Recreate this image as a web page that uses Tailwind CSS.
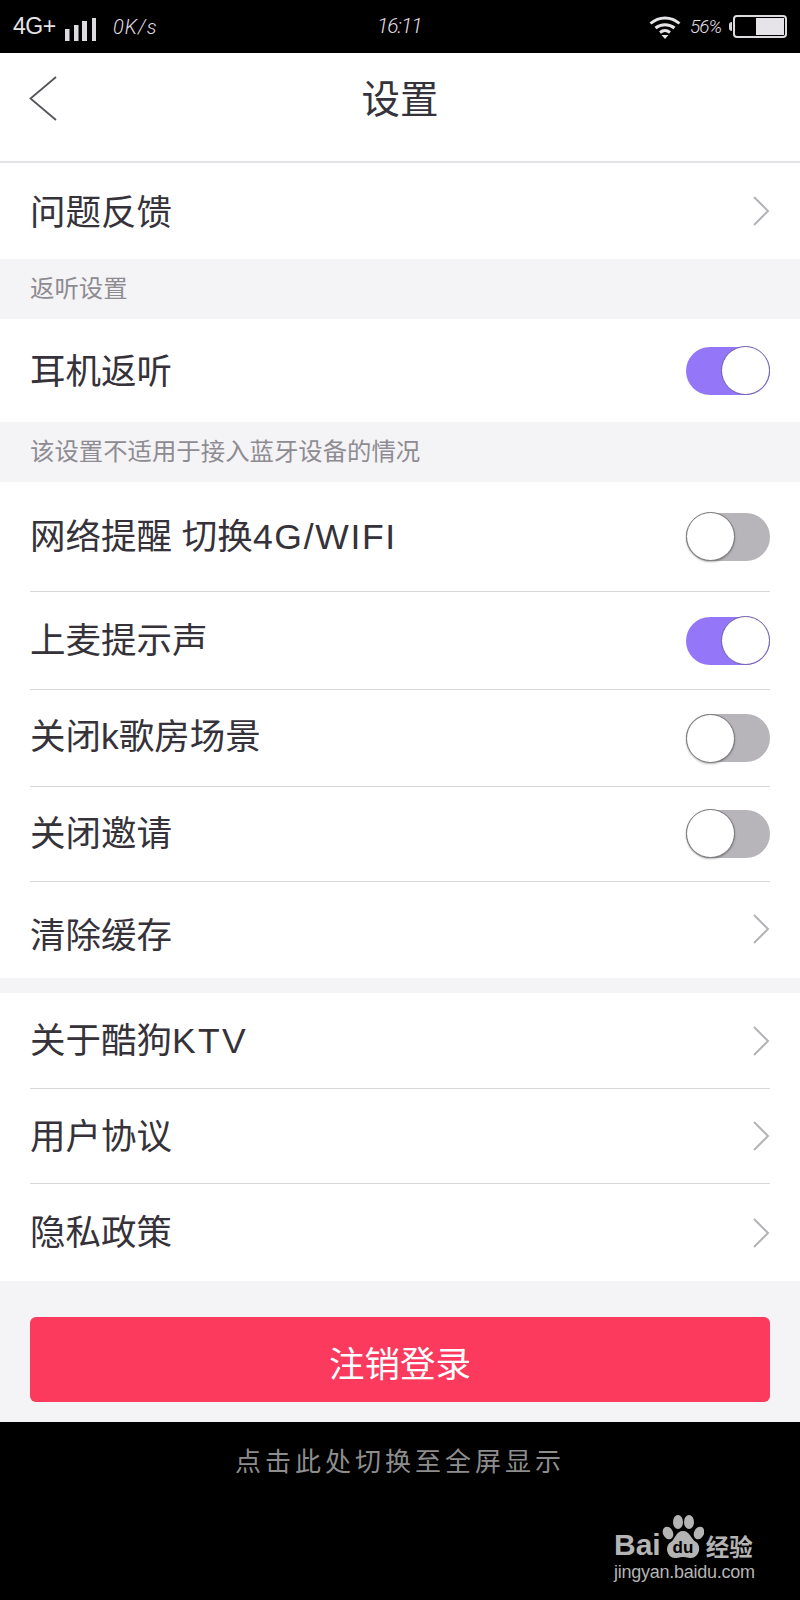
<!DOCTYPE html>
<html>
  <head>
    <meta charset="utf-8" />
    <title>设置</title>
    <script src="https://cdn.jsdelivr.net/npm/@tailwindcss/browser@4"></script>
  </head>
  <body>
    <div class="flex h-[1600px] w-[800px] flex-col overflow-hidden bg-[#f4f3f6] text-[#35323a]" style='font-family: "Liberation Sans", "Noto Sans CJK SC", sans-serif;'>
      <!-- Status bar -->
      <div class="flex h-[53px] shrink-0 items-center bg-black pl-[13px] text-[#e6e4e8]">
        <span class="w-[43px] shrink-0 text-[23px] leading-none tracking-[-0.5px]">4G+</span>
        <svg class="ml-[9px] mt-[5px] shrink-0" width="31" height="23" viewBox="0 0 31 23" fill="#dddbe0">
          <rect x="0" y="11" width="4.500" height="12" />
          <rect x="9" y="7" width="4.500" height="16" />
          <rect x="17" y="3" width="5" height="20" />
          <rect x="27" y="0" width="4" height="23" />
        </svg>
        <span class="ml-[17px] w-[45px] shrink-0 font-['Roboto'] text-[20px] leading-none font-light italic tracking-[1px] text-[#e0dee3]">0K/s</span>
        <span class="ml-[219px] w-[45px] shrink-0 font-['Roboto'] text-[21px] leading-none font-light italic tracking-[-1px] text-[#e0dee3]">16:11</span>
        <svg class="ml-[227px] shrink-0" width="32" height="24" viewBox="0 0 32 24" fill="none" stroke="#e6e4e8" stroke-width="3">
          <path d="M1.500 8.500C10 1 22 1 30.500 8.500" />
          <path d="M6.500 13C12 8.500 20 8.500 25.500 13" />
          <path d="M11 17.500C14 15.200 18 15.200 21 17.500" />
          <path d="M12.500 20L16 24L19.500 20Z" fill="#e6e4e8" stroke="none" />
        </svg>
        <span class="ml-[9px] w-[31px] shrink-0 font-['Roboto'] text-[19px] leading-none font-light italic tracking-[-1px] text-[#e0dee3]">56%</span>
        <div class="ml-[8px] h-[9px] w-[3px] shrink-0 rounded-l-sm bg-[#d8d6da]"></div>
        <div class="ml-[1px] flex h-[23px] w-[54px] shrink-0 justify-end rounded-[4px] border-2 border-[#dddbe0] p-[1px]">
          <div class="h-full w-[28px] bg-[#e6e4e8]"></div>
        </div>
      </div>

      <!-- Title bar -->
      <header class="relative flex h-[110px] shrink-0 items-center justify-center border-b-2 border-[#e4e2e7] bg-white pb-[14px]">
        <svg class="absolute left-[29px] top-[23px]" width="30" height="46" viewBox="0 0 30 46" fill="none" stroke="#56545a" stroke-width="1.800">
          <path d="M27 1L1.500 22.500L27 44" />
        </svg>
        <h1 class="text-[38.5px] leading-none font-normal">设置</h1>
      </header>

      <div class="flex h-[96px] shrink-0 items-center justify-between bg-white pl-[30px] pr-[30px]">
        <span class="mt-[6px] text-[35.5px] leading-none">问题反馈</span>
        <svg width="18" height="32" viewBox="0 0 18 32" fill="none" stroke="#b5b3b8" stroke-width="2"><path d="M2 2L16 16L2 30" /></svg>
      </div>

      <div class="flex h-[60px] shrink-0 items-center pl-[30px] text-[24.4px] leading-none text-[#8e8c92]">返听设置</div>

      <div class="flex h-[103px] shrink-0 items-center justify-between bg-white pl-[30px] pr-[30px]">
        <span class="mt-[4px] text-[35.5px] leading-none">耳机返听</span>
        <div class="flex h-[48px] w-[84px] items-center justify-end rounded-full bg-[#9476f8]">
          <div class="size-[49px] rounded-full border border-[#6f5aa8] bg-white"></div>
        </div>
      </div>

      <div class="flex h-[60px] shrink-0 items-center pl-[30px] text-[24.4px] leading-none text-[#8e8c92]">该设置不适用于接入蓝牙设备的情况</div>

      <div class="flex shrink-0 flex-col bg-white pl-[30px] pr-[30px]">
        <div class="flex h-[110px] items-center justify-between border-b border-[#d9d7dc]">
          <span class="mt-[2px] text-[35.5px] leading-none">网络提醒 切换<span class="tracking-[1.700px]">4G/WIFI</span></span>
          <div class="flex h-[48px] w-[84px] items-center rounded-full bg-[#b7b5b9]">
            <div class="size-[49px] rounded-full border border-[#77757a] bg-white shadow-[0_1px_2px_rgba(0,0,0,0.3)]"></div>
          </div>
        </div>
        <div class="flex h-[98px] items-center justify-between border-b border-[#d9d7dc]">
          <span class="mt-[2px] text-[35.5px] leading-none">上麦提示声</span>
          <div class="flex h-[48px] w-[84px] items-center justify-end rounded-full bg-[#9476f8]">
            <div class="size-[49px] rounded-full border border-[#6f5aa8] bg-white"></div>
          </div>
        </div>
        <div class="flex h-[97px] items-center justify-between border-b border-[#d9d7dc]">
          <span class="text-[35.5px] leading-none">关闭k歌房场景</span>
          <div class="flex h-[48px] w-[84px] items-center rounded-full bg-[#b7b5b9]">
            <div class="size-[49px] rounded-full border border-[#77757a] bg-white shadow-[0_1px_2px_rgba(0,0,0,0.3)]"></div>
          </div>
        </div>
        <div class="flex h-[95px] items-center justify-between border-b border-[#d9d7dc]">
          <span class="mt-[2px] text-[35.5px] leading-none">关闭邀请</span>
          <div class="-mt-[1px] flex h-[48px] w-[84px] items-center rounded-full bg-[#b7b5b9]">
            <div class="size-[49px] rounded-full border border-[#77757a] bg-white shadow-[0_1px_2px_rgba(0,0,0,0.3)]"></div>
          </div>
        </div>
        <div class="flex h-[96px] items-center justify-between">
          <span class="mt-[14px] text-[35.5px] leading-none">清除缓存</span>
          <svg class="-mt-[2px]" width="18" height="32" viewBox="0 0 18 32" fill="none" stroke="#b5b3b8" stroke-width="2"><path d="M2 2L16 16L2 30" /></svg>
        </div>
      </div>

      <div class="mt-[15px] flex shrink-0 flex-col bg-white pl-[30px] pr-[30px]">
        <div class="flex h-[96px] items-center justify-between border-b border-[#d9d7dc]">
          <span class="mt-[2px] text-[35.5px] leading-none">关于酷狗<span class="tracking-[2.300px]">KTV</span></span>
          <svg width="18" height="32" viewBox="0 0 18 32" fill="none" stroke="#b5b3b8" stroke-width="2"><path d="M2 2L16 16L2 30" /></svg>
        </div>
        <div class="flex h-[95px] items-center justify-between border-b border-[#d9d7dc]">
          <span class="mt-[4px] text-[35.5px] leading-none">用户协议</span>
          <svg width="18" height="32" viewBox="0 0 18 32" fill="none" stroke="#b5b3b8" stroke-width="2"><path d="M2 2L16 16L2 30" /></svg>
        </div>
        <div class="flex h-[97px] items-center justify-between">
          <span class="mt-[2px] text-[35.5px] leading-none">隐私政策</span>
          <svg width="18" height="32" viewBox="0 0 18 32" fill="none" stroke="#b5b3b8" stroke-width="2"><path d="M2 2L16 16L2 30" /></svg>
        </div>
      </div>

      <!-- Logout -->
      <div class="flex h-[141px] shrink-0 flex-col pl-[30px] pr-[30px] pt-[36px]">
        <button class="flex h-[85px] w-full items-center justify-center rounded-[6px] bg-[#fb3a5e] pt-[12px] text-[35.5px] leading-none text-white">注销登录</button>
      </div>

      <!-- Navigation strip with watermark -->
      <div class="relative flex grow flex-col items-center bg-black pt-[27px]">
        <span class="text-[26px] leading-none tracking-[4px] text-[#8d8d8d]">点击此处切换至全屏显示</span>
        <div class="absolute left-[614px] top-[93px] flex w-[142px] flex-col text-[#b4b4b4]">
          <div class="flex items-end">
            <span class="text-[30px] leading-none font-bold">Bai</span>
            <svg class="ml-[1px] shrink-0" width="42" height="45" viewBox="0 0 42 45">
              <ellipse cx="6" cy="18" rx="5" ry="6.500" fill="#b4b4b4" transform="rotate(-25 6 18)" />
              <ellipse cx="16" cy="7" rx="5" ry="7" fill="#b4b4b4" />
              <ellipse cx="27" cy="7" rx="5" ry="7" fill="#b4b4b4" />
              <ellipse cx="37" cy="18" rx="5" ry="6.500" fill="#b4b4b4" transform="rotate(25 37 18)" />
              <path d="M21 16C28 16 28 23 34 27C40 31 37 43 29 43C25 43 24 42 21 42C18 42 17 43 13 43C5 43 2 31 9 27C14 23 14 16 21 16Z" fill="#b4b4b4" />
              <text x="21" y="38" font-size="17" font-weight="700" text-anchor="middle" fill="#000" font-family="Liberation Sans">du</text>
            </svg>
            <span class="ml-[2px] text-[23.5px] leading-none font-bold">经验</span>
          </div>
          <span class="mt-[3px] whitespace-nowrap text-[18px] leading-none tracking-[-0.25px]">jingyan.baidu.com</span>
        </div>
      </div>
    </div>
  </body>
</html>
